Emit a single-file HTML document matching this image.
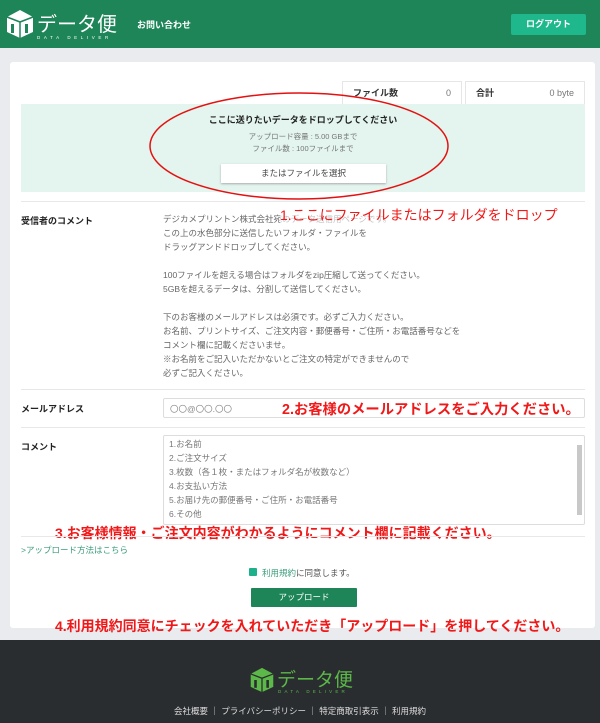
<!DOCTYPE html>
<html><head><meta charset="utf-8">
<style>
*{box-sizing:border-box;margin:0;padding:0}
body{width:600px;height:723px;background:#e9ebee;font-family:"Liberation Sans","Noto Sans CJK JP",sans-serif;position:relative;overflow:hidden;color:#333}
.a{position:absolute}
.hdr{left:0;top:0;width:600px;height:48px;background:#1d8558}
.card{left:10px;top:62px;width:585px;height:566px;background:#fff;border-radius:3px}
.box{border:1px solid #e6e6e6;background:#fff;height:24px;font-size:9px;font-weight:bold;padding:0 10px;line-height:22px}
.box span{float:right;font-weight:normal;color:#777}
.sep{left:21px;width:564px;height:1px;background:#e8e8e8}
.lbl{font-size:9px;font-weight:bold;color:#222}
.red{color:#f01818;font-weight:bold;white-space:nowrap}
.gt{font-size:8.5px;color:#666;line-height:14px;white-space:nowrap}
</style></head><body>
<div class="a hdr"></div>
<svg class="a" style="left:5px;top:9px" width="30" height="30" viewBox="0 0 30 30"><path d="M15 1 28 8 28 23 15 29 2 23 2 8Z" fill="#fff"/><path d="M15 13 28 8M15 13 2 8M15 13V29" stroke="#1d8558" stroke-width="1.5" fill="none"/><rect x="6" y="15" width="3" height="9" fill="#1d8558"/><rect x="20" y="15" width="3" height="9" fill="#1d8558"/></svg>
<div class="a" style="left:37px;top:8px;font-size:20px;color:#fff;letter-spacing:0px">データ便</div>
<div class="a" style="left:37px;top:35px;font-size:4.5px;color:#fff;letter-spacing:3.6px">DATA DELIVER</div>
<div class="a" style="left:137px;top:18px;font-size:9px;color:#fff;font-weight:bold">お問い合わせ</div>
<div class="a" style="left:511px;top:14px;width:75px;height:21px;background:#1eb88c;border-radius:2px;color:#fff;font-size:9px;font-weight:bold;text-align:center;line-height:21px">ログアウト</div>
<div class="a card"></div>
<div class="a box" style="left:342px;top:81px;width:120px">ファイル数<span>0</span></div>
<div class="a box" style="left:465px;top:81px;width:120px">合計<span>0 byte</span></div>
<div class="a" style="left:21px;top:104px;width:564px;height:88px;background:#e3f5ee"></div>
<div class="a" style="left:21px;top:113px;width:564px;text-align:center;font-size:9px;font-weight:bold;color:#222">ここに送りたいデータをドロップしてください</div>
<div class="a" style="left:21px;top:131px;width:564px;text-align:center;font-size:7.5px;color:#777;line-height:12px">アップロード容量 : 5.00 GBまで<br>ファイル数 : 100ファイルまで</div>
<div class="a" style="left:221px;top:164px;width:165px;height:19px;background:#fff;box-shadow:0 1px 2px #aaa;text-align:center;font-size:8.5px;line-height:19px;color:#444">またはファイルを選択</div>
<svg class="a" style="left:0;top:0" width="600" height="723"><ellipse cx="299" cy="146" rx="149" ry="53" fill="none" stroke="#e51010" stroke-width="1.5"/></svg>
<div class="a sep" style="top:201px"></div>
<div class="a lbl" style="left:21px;top:214px">受信者のコメント</div>
<div class="a gt" style="left:163px;top:212px">デジカメプリントン株式会社宛のデータ送信用ページです。<br>この上の水色部分に送信したいフォルダ・ファイルを<br>ドラッグアンドドロップしてください。<br><br>100ファイルを超える場合はフォルダをzip圧縮して送ってください。<br>5GBを超えるデータは、分割して送信してください。<br><br>下のお客様のメールアドレスは必須です。必ずご入力ください。<br>お名前、プリントサイズ、ご注文内容・郵便番号・ご住所・お電話番号などを<br>コメント欄に記載くださいませ。<br>※お名前をご記入いただかないとご注文の特定ができませんので<br>必ずご記入ください。</div>
<div class="a red" style="left:280px;top:205px;font-size:14px;font-weight:normal;background:rgba(255,255,255,.6)">1.ここにファイルまたはフォルダをドロップ</div>
<div class="a sep" style="top:389px"></div>
<div class="a lbl" style="left:21px;top:402px">メールアドレス</div>
<div class="a" style="left:163px;top:398px;width:422px;height:20px;border:1px solid #ddd;border-radius:2px;font-size:8.5px;color:#888;padding:4px 6px">〇〇@〇〇.〇〇</div>
<div class="a red" style="left:282px;top:398px;font-size:14.3px">2.お客様のメールアドレスをご入力ください。</div>
<div class="a sep" style="top:427px"></div>
<div class="a lbl" style="left:21px;top:440px">コメント</div>
<div class="a" style="left:163px;top:435px;width:422px;height:90px;border:1px solid #ddd;border-radius:2px"></div>
<div class="a" style="left:577px;top:445px;width:5px;height:70px;background:#c8c8c8"></div>
<div class="a gt" style="left:169px;top:437px;color:#777">1.お名前<br>2.ご注文サイズ<br>3.枚数（各１枚・またはフォルダ名が枚数など）<br>4.お支払い方法<br>5.お届け先の郵便番号・ご住所・お電話番号<br>6.その他</div>
<div class="a red" style="left:55px;top:523px;font-size:14px">3.お客様情報・ご注文内容がわかるようにコメント欄に記載ください。</div>
<div class="a sep" style="top:536px"></div>
<div class="a" style="left:21px;top:544px;font-size:8.5px;color:#3c9c7c">&gt;アップロード方法はこちら</div>
<div class="a" style="left:249px;top:568px;width:8px;height:8px;background:#1eb08a;border-radius:1px"></div>
<div class="a" style="left:262px;top:567px;font-size:8.5px;color:#555"><span style="color:#3c9c7c">利用規約</span>に同意します。</div>
<div class="a" style="left:251px;top:588px;width:106px;height:19px;background:#1d8558;color:#fff;font-size:8.5px;text-align:center;line-height:19px;border-radius:1px">アップロード</div>
<div class="a red" style="left:55px;top:616px;font-size:14px">4.利用規約同意にチェックを入れていただき「アップロード」を押してください。</div>
<div class="a" style="left:0;top:640px;width:600px;height:83px;background:#2a2d30"></div>
<svg class="a" style="left:249px;top:667px" width="26" height="26" viewBox="0 0 30 30"><path d="M15 1 28 8 28 23 15 29 2 23 2 8Z" fill="#5cb848"/><path d="M15 13 28 8M15 13 2 8M15 13V29" stroke="#2a2d30" stroke-width="1.5" fill="none"/><rect x="6" y="15" width="3" height="9" fill="#2a2d30"/><rect x="20" y="15" width="3" height="9" fill="#2a2d30"/></svg>
<div class="a" style="left:277px;top:665px;font-size:19px;color:#5cb848">データ便</div>
<div class="a" style="left:278px;top:689px;font-size:4.5px;color:#5cb848;letter-spacing:3.2px">DATA DELIVER</div>
<div class="a" style="left:0;top:705px;width:600px;text-align:center;font-size:8.5px;color:#ddd">会社概要 ｜ プライバシーポリシー ｜ 特定商取引表示 ｜ 利用規約</div>
</body></html>
